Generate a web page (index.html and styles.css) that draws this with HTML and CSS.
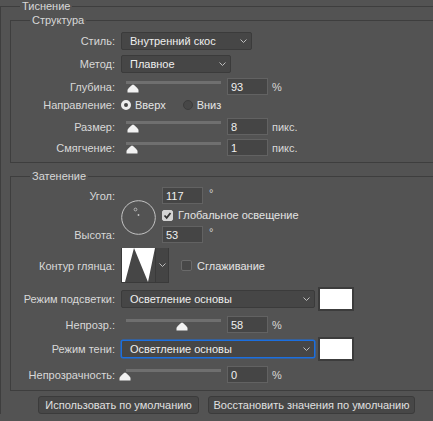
FILE: index.html
```html
<!DOCTYPE html>
<html lang="ru">
<head>
  <meta charset="UTF-8">
  <title>Тиснение</title>
  <link rel="stylesheet" href="styles.css">
</head>
<body>
  <fieldset class="group outer">
    <legend>Тиснение</legend>

    <fieldset class="group inner structure">
      <legend>Структура</legend>

      <div class="row">
        <span class="lbl">Стиль:</span>
        <div class="select w-style">Внутренний скос
          <svg class="chev" width="7" height="4"><polyline points="0.5,0.5 3.5,3.5 6.5,0.5"/></svg>
        </div>
      </div>

      <div class="row gap5">
        <span class="lbl">Метод:</span>
        <div class="select w-method">Плавное
          <svg class="chev" width="7" height="4"><polyline points="0.5,0.5 3.5,3.5 6.5,0.5"/></svg>
        </div>
      </div>

      <div class="row num-row gap5">
        <span class="lbl">Глубина:</span>
        <div class="slider">
          <div class="track"></div>
          <svg class="thumb" width="12" height="9" style="margin-left:6px"><path d="M6 0.5C7 0.5 11.5 5 11.5 6V8.5H0.5V6C0.5 5 5 0.5 6 0.5Z"/></svg>
        </div>
        <input class="num" type="text" value="93">
        <span class="unit">%</span>
      </div>

      <div class="row radios">
        <span class="lbl">Направление:</span>
        <span class="radio on"></span><span class="opt">Вверх</span>
        <span class="radio off"></span><span class="opt">Вниз</span>
      </div>

      <div class="row num-row gap6">
        <span class="lbl">Размер:</span>
        <div class="slider">
          <div class="track"></div>
          <svg class="thumb" width="12" height="9" style="margin-left:6px"><path d="M6 0.5C7 0.5 11.5 5 11.5 6V8.5H0.5V6C0.5 5 5 0.5 6 0.5Z"/></svg>
        </div>
        <input class="num" type="text" value="8">
        <span class="unit">пикс.</span>
      </div>

      <div class="row num-row gap4">
        <span class="lbl">Смягчение:</span>
        <div class="slider">
          <div class="track"></div>
          <svg class="thumb" width="12" height="9" style="margin-left:5px"><path d="M6 0.5C7 0.5 11.5 5 11.5 6V8.5H0.5V6C0.5 5 5 0.5 6 0.5Z"/></svg>
        </div>
        <input class="num" type="text" value="1">
        <span class="unit">пикс.</span>
      </div>
    </fieldset>

    <fieldset class="group inner shading">
      <legend>Затенение</legend>

      <div class="angle">
        <span class="lbl">Угол:</span>
        <svg class="dial" width="35" height="35">
          <circle cx="17.5" cy="17.5" r="16.8"/>
          <circle class="dot" cx="14.5" cy="9.5" r="1.4"/>
          <circle class="center" cx="17.5" cy="15" r="0.9"/>
        </svg>
        <div class="field"><input class="num" type="text" value="117"><span class="deg">°</span></div>
        <span></span>
        <label class="checkrow"><span class="check on"><svg width="9" height="9"><polyline points="1.5,4.5 3.7,6.8 7.5,2"/></svg></span>Глобальное освещение</label>
        <span class="lbl">Высота:</span>
        <div class="field"><input class="num" type="text" value="53"><span class="deg">°</span></div>
      </div>

      <div class="row contour-row">
        <span class="lbl">Контур глянца:</span>
        <div class="contour">
          <svg class="curve" width="33" height="34"><rect width="33" height="34" fill="#fff"/><polygon points="3,34 12,0 26,34 33,0 33,34"/></svg>
          <div class="contour-drop">
            <svg class="chev" width="7" height="4"><polyline points="0.5,0.5 3.5,3.5 6.5,0.5"/></svg>
          </div>
        </div>
        <label class="checkrow smooth"><span class="check"></span>Сглаживание</label>
      </div>

      <div class="row mode-row">
        <span class="lbl">Режим подсветки:</span>
        <div class="select w-mode">Осветление основы
          <svg class="chev" width="7" height="4"><polyline points="0.5,0.5 3.5,3.5 6.5,0.5"/></svg>
        </div>
        <div class="swatch"></div>
      </div>

      <div class="row num-row gap5">
        <span class="lbl">Непрозр.:</span>
        <div class="slider">
          <div class="track"></div>
          <svg class="thumb" width="12" height="9" style="margin-left:55px"><path d="M6 0.5C7 0.5 11.5 5 11.5 6V8.5H0.5V6C0.5 5 5 0.5 6 0.5Z"/></svg>
        </div>
        <input class="num" type="text" value="58">
        <span class="unit">%</span>
      </div>

      <div class="row mode-row">
        <span class="lbl">Режим тени:</span>
        <div class="select w-mode focus">Осветление основы
          <svg class="chev" width="7" height="4"><polyline points="0.5,0.5 3.5,3.5 6.5,0.5"/></svg>
        </div>
        <div class="swatch"></div>
      </div>

      <div class="row num-row gap5">
        <span class="lbl">Непрозрачность:</span>
        <div class="slider">
          <div class="track"></div>
          <svg class="thumb" width="12" height="9" style="margin-left:-2px"><path d="M6 0.5C7 0.5 11.5 5 11.5 6V8.5H0.5V6C0.5 5 5 0.5 6 0.5Z"/></svg>
        </div>
        <input class="num" type="text" value="0">
        <span class="unit">%</span>
      </div>
    </fieldset>

    <div class="buttons">
      <button class="btn btn-default" type="button">Использовать по умолчанию</button>
      <button class="btn btn-reset" type="button">Восстановить значения по умолчанию</button>
    </div>
  </fieldset>
</body>
</html>
```

FILE: styles.css
```css
* {
  box-sizing: border-box;
}

body {
  margin: 0;
  width: 433px;
  height: 421px;
  overflow: hidden;
  background: #535353;
  color: #d8d8d8;
  font-family: "Liberation Sans", Arial, sans-serif;
  font-size: 11px;
}

.group {
  margin: 0;
  min-width: 0;
  border: 1px solid #3e3e3e;
  border-right: 0;
}

.group legend {
  padding: 0 2px;
  line-height: 13px;
}

.outer {
  width: 433px;
  padding: 1px 0 0 9px;
  border-bottom: 0;
}

.outer > legend {
  margin-left: 10px;
}

.inner {
  width: 423px;
  padding: 5px 0 6px 0;
}

.inner > legend {
  margin-left: 19px;
}

.shading {
  margin-top: 7px;
  padding: 4px 0 7px 0;
}

/* rows */
.row {
  display: flex;
  align-items: center;
  height: 18px;
}

.num-row {
  height: 17px;
}

.gap4 { margin-top: 4px; }
.gap5 { margin-top: 5px; }
.gap6 { margin-top: 6px; }

.lbl {
  flex: none;
  width: 104px;
  margin-right: 6px;
  text-align: right;
  white-space: nowrap;
}

/* dropdowns */
.select {
  display: flex;
  align-items: center;
  justify-content: space-between;
  height: 18px;
  padding: 0 4px 0 8px;
  background: #464646;
  border: 1px solid #3b3b3b;
  border-radius: 2px;
  color: #efefef;
  white-space: nowrap;
}

.select.focus {
  border-color: #1b6fe0;
  box-shadow: 0 0 0 0.5px #1b6fe0;
}

.w-style { width: 131px; }
.w-method { width: 110px; }
.w-mode { width: 194px; }

.chev {
  flex: none;
}

.chev polyline {
  fill: none;
  stroke: #bdbdbd;
  stroke-width: 1;
}

/* sliders */
.slider {
  flex: none;
  align-self: flex-start;
  width: 106px;
  height: 17px;
  padding-top: 3px;
}

.track {
  width: 95px;
  height: 3px;
  margin-left: 5px;
  background: #6f6f6f;
}

.thumb {
  display: block;
}

.thumb path {
  fill: #f2f2f2;
}

.num {
  flex: none;
  width: 41px;
  height: 17px;
  margin: 0;
  padding: 0 3px;
  background: #454545;
  border: 1px solid #626262;
  color: #f0f0f0;
  font: inherit;
  outline: none;
}

.unit {
  margin-left: 4px;
}

/* direction */
.radios {
  height: 14px;
  margin-top: 3px;
}

.radio {
  flex: none;
  width: 10px;
  height: 10px;
  border-radius: 50%;
}

.radio.on {
  background: #444;
  border: 3px solid #ececec;
}

.radio.off {
  margin-left: 17px;
  background: #474747;
  border: 1px solid #3c3c3c;
}

.opt {
  margin-left: 4px;
  color: #e6e6e6;
}

/* angle block */
.angle {
  display: grid;
  grid-template-columns: 104px 35px auto;
  grid-template-rows: 17px 22px 17px;
  column-gap: 6px;
  align-items: center;
}

.angle .lbl {
  width: auto;
  margin: 0;
}

.dial {
  grid-column: 2;
  grid-row: 1 / 4;
  align-self: start;
  margin-top: 13px;
}

.dial circle {
  fill: none;
  stroke: #c4c4c4;
  stroke-width: 1;
}

.dial .dot {
  stroke-width: 0.8;
}

.dial .center {
  fill: #c4c4c4;
  stroke: none;
}

.field {
  display: flex;
  align-items: flex-start;
}

.deg {
  margin-left: 6px;
  margin-top: 1px;
  line-height: 10px;
}

.checkrow {
  display: flex;
  align-items: center;
  white-space: nowrap;
  color: #e4e4e4;
}

.check {
  flex: none;
  display: flex;
  align-items: center;
  justify-content: center;
  width: 11px;
  height: 11px;
  margin-right: 5px;
  border: 1px solid #6a6a6a;
  border-radius: 2px;
  background: #484848;
}

.check.on {
  background: #d4d4d4;
  border-color: #d4d4d4;
}

.check polyline {
  fill: none;
  stroke: #333;
  stroke-width: 1.8;
}

/* contour */
.contour-row {
  height: 35px;
  margin-top: 5px;
}

.contour {
  flex: none;
  display: flex;
  height: 35px;
  border: 1px solid #3a3a3a;
  border-top: 0;
}

.curve {
  display: block;
}

.curve polygon {
  fill: #464646;
}

.contour-drop {
  display: flex;
  align-items: center;
  justify-content: center;
  width: 13px;
  background: #444;
  border-left: 1px solid #3a3a3a;
}

.smooth {
  margin-left: 12px;
}

/* blend modes */
.mode-row {
  height: 24px;
  margin-top: 4px;
}

.swatch {
  flex: none;
  width: 36px;
  height: 24px;
  margin-left: 3px;
  background: #fff;
  border: 2px solid #3c3c3c;
}

/* buttons */
.buttons {
  display: flex;
  gap: 9px;
  margin-top: 5px;
  padding-left: 28px;
}

.btn {
  height: 18px;
  padding: 0;
  background: #474747;
  border: 1px solid #3b3b3b;
  border-radius: 3px;
  color: #e0e0e0;
  font: inherit;
}

.btn-default { width: 161px; }
.btn-reset { width: 207px; }
```
